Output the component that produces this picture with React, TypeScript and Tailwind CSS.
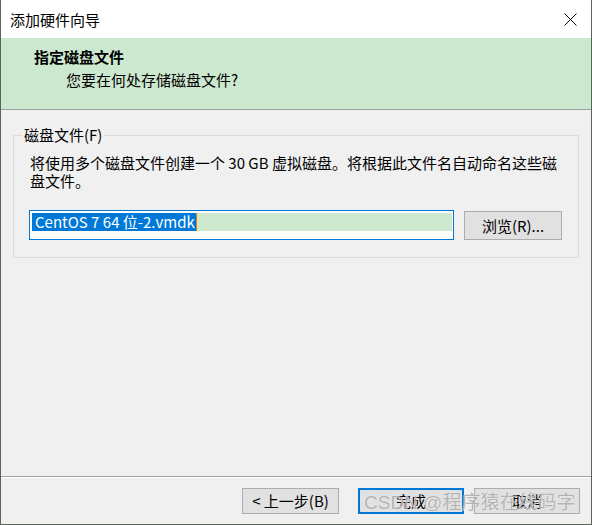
import React from "react";

const font = {
  fontFamily: '"Noto Sans CJK SC", "Noto Sans", sans-serif',
};

export default function App() {
  return (
    <div
      className="relative w-[592px] h-[525px] flex flex-col bg-[#f0f0f0] border-l border-r border-b border-[#5b655d] text-black overflow-hidden"
      style={font}
    >
      {/* Title bar */}
      <div className="h-[38px] shrink-0 bg-white flex items-center justify-between pl-[9px] pr-[14px]">
        <span className="text-[15px] leading-[20px] pt-[1px]">添加硬件向导</span>
        <svg width="13" height="13" viewBox="0 0 13 13" className="mt-[1px]">
          <path d="M0.5 0.5 L12.5 12.5 M12.5 0.5 L0.5 12.5" stroke="#000" strokeWidth="1" fill="none" />
        </svg>
      </div>

      {/* Header */}
      <div className="h-[72px] shrink-0 bg-[#cce8cf] border-b border-[#a0a0a0] pl-[33px] pt-[9px]">
        <div className="text-[15px] font-bold leading-[20px]">指定磁盘文件</div>
        <div className="text-[15px] leading-[20px] pl-[32px] mt-[3px]">您要在何处存储磁盘文件?</div>
      </div>

      {/* Content */}
      <div className="flex-1 pt-[25px] pl-[12px]">
        <div className="relative w-[566px] h-[123px] border border-[#dcdcdc] pl-[15px] pt-[18px]">
          <span className="absolute left-[8px] top-[-11px] px-[2px] bg-[#f0f0f0] text-[15px] leading-[20px]">
            磁盘文件(F)
          </span>
          <div className="text-[15px] leading-[18px] ml-[1px] whitespace-nowrap">
            将使用多个磁盘文件创建一个 30 GB 虚拟磁盘。将根据此文件名自动命名这些磁
            <br />
            盘文件。
          </div>
          <div className="flex items-start gap-[10px] mt-[20px]">
            <div className="w-[425px] h-[30px] bg-white border border-[#0078d7] pt-[2px] pl-[2px] pr-[1px]">
              <div className="flex h-[18px]">
                <span className="bg-[#0078d7] text-white text-[15px] leading-[18px] pl-[3px] pr-[1px] whitespace-nowrap">
                  CentOS 7 64 位-2.vmdk
                </span>
                <span className="w-[1px] bg-[#e07b00]" />
                <span className="flex-1 bg-[#cce8cf]" />
              </div>
            </div>
            <button className="mt-[1px] w-[98px] h-[29px] bg-[#e1e1e1] border border-[#adadad] text-[15px] leading-[20px] flex items-center justify-center">
              浏览(R)...
            </button>
          </div>
        </div>
      </div>

      {/* Footer */}
      <div className="h-[48px] shrink-0 border-t border-[#a0a0a0]">
        <div className="h-full border-t border-white flex items-start justify-end pt-[10px] pr-[11px]">
          <button className="w-[97px] h-[26px] bg-[#e1e1e1] border border-[#adadad] text-[15px] leading-[20px] flex items-center justify-center">
            &lt; 上一步(B)
          </button>
          <button className="ml-[19px] w-[106px] h-[26px] bg-[#e1e1e1] border-2 border-[#0078d7] text-[15px] leading-[20px] flex items-center justify-center">
            完成
          </button>
          <button className="ml-[10px] w-[106px] h-[26px] bg-[#e1e1e1] border border-[#adadad] text-[15px] leading-[20px] flex items-center justify-center">
            取消
          </button>
        </div>
      </div>

      {/* Watermark */}
      <div
        className="absolute left-[363px] top-[491px] text-[19px] leading-[24px] text-[#a0a0a0]/80 whitespace-nowrap pointer-events-none [text-shadow:0_0_1px_#ffffff]"
        style={{ fontFamily: '"Liberation Sans", "Noto Sans CJK SC", sans-serif' }}
      >
        CSDN @程序猿在线码字
      </div>
    </div>
  );
}
